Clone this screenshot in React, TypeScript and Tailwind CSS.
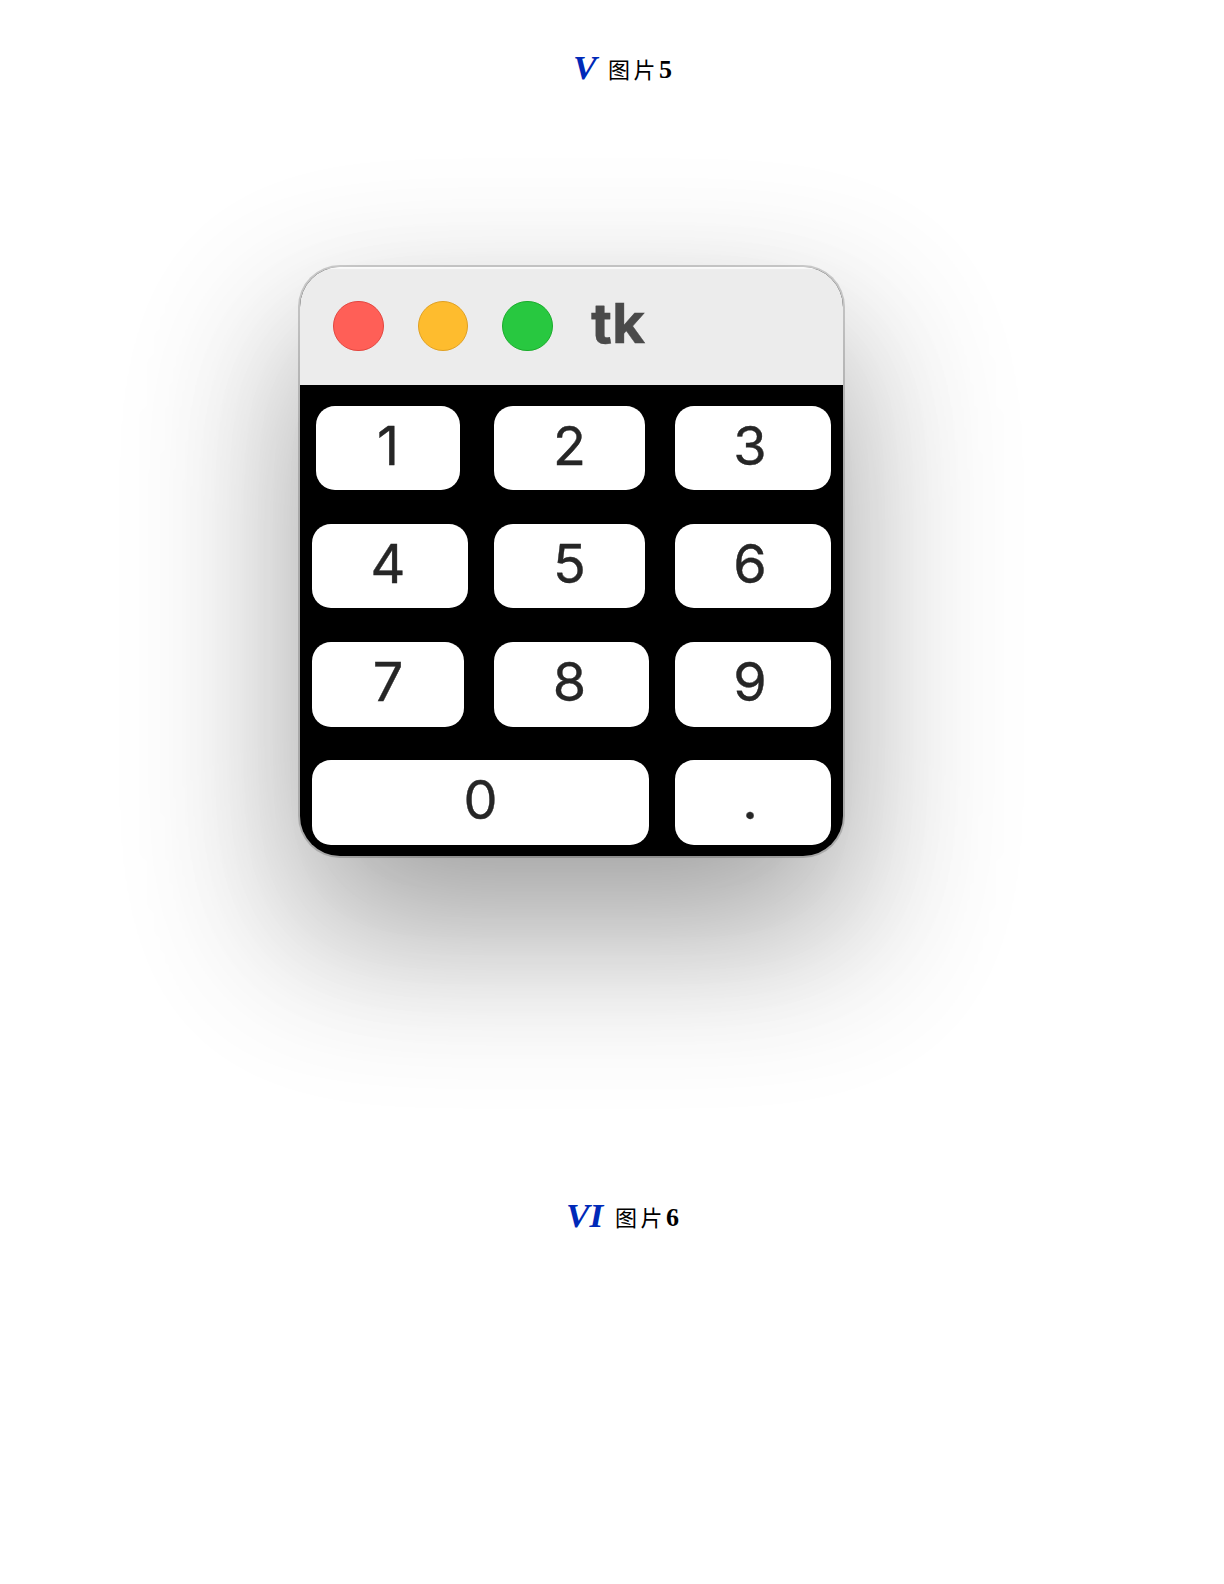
import React from "react";

type KeyProps = { label: string; box: string; text?: string };

const rows: { className: string; keys: KeyProps[] }[] = [
  {
    className: "h-[84px] mt-[21px]",
    keys: [
      { label: "1", box: "ml-4 w-36" },
      { label: "2", box: "ml-[34px] w-[151px]" },
      { label: "3", box: "ml-[30px] w-[156px]", text: "-translate-x-[3px]" },
    ],
  },
  {
    className: "h-[84px] mt-[34px]",
    keys: [
      { label: "4", box: "ml-3 w-[156px]", text: "-translate-x-[2px]" },
      { label: "5", box: "ml-[26px] w-[151px]" },
      { label: "6", box: "ml-[30px] w-[156px]", text: "-translate-x-[3px]" },
    ],
  },
  {
    className: "h-[85px] mt-[34px]",
    keys: [
      { label: "7", box: "ml-3 w-[152px]" },
      { label: "8", box: "ml-[30px] w-[155px]", text: "-translate-x-[2px]" },
      { label: "9", box: "ml-[26px] w-[156px]", text: "-translate-x-[3px]" },
    ],
  },
  {
    className: "h-[85px] mt-[33px]",
    keys: [
      { label: "0", box: "ml-3 w-[337px]" },
      { label: ".", box: "ml-[26px] w-[156px]", text: "-translate-x-[3px]" },
    ],
  },
];

function Key({ label, box, text = "" }: KeyProps) {
  return (
    <button className={`flex h-full shrink-0 items-start justify-center rounded-[19px] bg-white ${box}`}>
      <span className={`block text-[54px] leading-[80px] text-[#262626] [-webkit-text-stroke:0.4px_#262626] ${text}`}>{label}</span>
    </button>
  );
}

function Caption({ numeral, digit, className, numeralClass }: { numeral: string; digit: string; className: string; numeralClass: string }) {
  return (
    <h2 className={`flex h-10 items-baseline whitespace-nowrap font-['Liberation_Serif','Noto_Sans_CJK_SC',serif] leading-10 ${className}`}>
      <span className={`origin-left text-[33px] font-bold italic text-[#0029b8] ${numeralClass}`}>{numeral}</span>
      <span className="ml-auto -translate-y-px text-[22px] tracking-[3.5px] text-black">图片</span>
      <span className="-translate-y-px text-[26px] font-bold text-black">{digit}</span>
    </h2>
  );
}

export default function App() {
  return (
    <main className="flex h-[1584px] w-[1224px] flex-col overflow-hidden bg-white">
      <Caption numeral="V" digit="5" className="mt-[48px] ml-[573px] w-[99px]" numeralClass="scale-x-[1.08]" />
      <section className="mt-[179px] ml-[300px] h-[589px] w-[543px] shrink-0 overflow-hidden rounded-[40px] bg-black font-['Inter',sans-serif] shadow-[0_0_0_2px_rgba(0,0,0,0.18),0_72px_155px_-10px_rgba(0,0,0,0.35),0_72px_155px_70px_rgba(0,0,0,0.055)]">
        <header className="flex h-[118px] items-start bg-[#ececec] pl-[33px] shadow-[inset_0_3px_1px_-1px_#fafafa]">
          <div className="mt-[34px] flex gap-[34px]">
            <span className="h-[50px] w-[51px] rounded-full border-[1.5px] border-[#e2463f] bg-[#ff5f57]" />
            <span className="h-[50px] w-[50px] rounded-full border-[1.5px] border-[#dfa023] bg-[#febc2e]" />
            <span className="h-[50px] w-[51px] rounded-full border-[1.5px] border-[#1bac2c] bg-[#28c840]" />
          </div>
          <h1 className="mt-[23px] ml-[38px] origin-left scale-x-[1.04] text-[55px] leading-[66px] font-bold text-[#4a4a4a] [-webkit-text-stroke:0.4px_#4a4a4a]">tk</h1>
        </header>
        <div>
          {rows.map((row, i) => (
            <div key={i} className={`flex ${row.className}`}>
              {row.keys.map((k) => (
                <Key key={k.label} {...k} />
              ))}
            </div>
          ))}
        </div>
      </section>
      <Caption numeral="VI" digit="6" className="mt-[340px] ml-[566px] w-[113px]" numeralClass="scale-x-[1.07]" />
    </main>
  );
}
